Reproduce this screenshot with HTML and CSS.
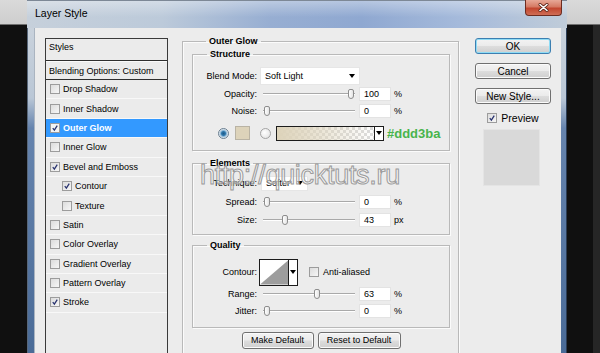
FILE: index.html
```html
<!DOCTYPE html>
<html lang="en">
<head>
  <meta charset="UTF-8">
  <title>Layer Style</title>
  <link rel="stylesheet" href="styles.css">
</head>
<body>
  <div class="window">
    <div class="titlebar">
      <span class="title">Layer Style</span>
      <span class="close">
        <svg width="11" height="9" viewBox="0 0 11 9"><path d="M2 1.5 L9 7.5 M9 1.5 L2 7.5" stroke="#5a2418" stroke-width="3" stroke-linecap="round"/><path d="M2 1.5 L9 7.5 M9 1.5 L2 7.5" stroke="#fff" stroke-width="1.6" stroke-linecap="round"/></svg>
      </span>
    </div>

    <div class="window-body">
      <div class="frame-side"></div>

      <div class="client">
        <ul class="styles-list">
          <li class="list-head">Styles</li>
          <li class="list-blend">Blending Options: Custom</li>
          <li class="style-item"><span class="check"></span>Drop Shadow</li>
          <li class="style-item"><span class="check"></span>Inner Shadow</li>
          <li class="style-item selected"><span class="check on"><svg viewBox="0 0 10 10"><path d="M2.2 5.2 L4.2 7.6 L7.8 2"/></svg></span>Outer Glow</li>
          <li class="style-item"><span class="check"></span>Inner Glow</li>
          <li class="style-item"><span class="check on"><svg viewBox="0 0 10 10"><path d="M2.2 5.2 L4.2 7.6 L7.8 2"/></svg></span>Bevel and Emboss</li>
          <li class="style-item sub"><span class="check on"><svg viewBox="0 0 10 10"><path d="M2.2 5.2 L4.2 7.6 L7.8 2"/></svg></span>Contour</li>
          <li class="style-item sub"><span class="check"></span>Texture</li>
          <li class="style-item"><span class="check"></span>Satin</li>
          <li class="style-item"><span class="check"></span>Color Overlay</li>
          <li class="style-item"><span class="check"></span>Gradient Overlay</li>
          <li class="style-item"><span class="check"></span>Pattern Overlay</li>
          <li class="style-item"><span class="check on"><svg viewBox="0 0 10 10"><path d="M2.2 5.2 L4.2 7.6 L7.8 2"/></svg></span>Stroke</li>
        </ul>

        <div class="settings">
          <fieldset class="group outer">
            <legend>Outer Glow</legend>

            <fieldset class="group structure">
              <legend>Structure</legend>
              <div class="row blend-row">
                <span class="field-label">Blend Mode:</span>
                <span class="select blend-select">Soft Light<span class="caret"></span></span>
              </div>
              <div class="row slider-row">
                <span class="field-label">Opacity:</span>
                <span class="slider"><span class="thumb" style="left: 85px"></span></span>
                <span class="num">100</span>
                <span class="unit">%</span>
              </div>
              <div class="row slider-row">
                <span class="field-label">Noise:</span>
                <span class="slider"><span class="thumb" style="left: 1px"></span></span>
                <span class="num">0</span>
                <span class="unit">%</span>
              </div>
              <div class="row color-row">
                <span class="radio on"></span>
                <span class="swatch"></span>
                <span class="radio"></span>
                <span class="gradient-field"><span class="gradient-fill"></span><span class="arrow-cell"><span class="caret"></span></span></span>
                <span class="hex">#ddd3ba</span>
              </div>
            </fieldset>

            <fieldset class="group elements">
              <legend>Elements</legend>
              <div class="row technique-row">
                <span class="field-label">Technique:</span>
                <span class="select technique-select">Softer<span class="caret"></span></span>
              </div>
              <div class="row slider-row tall">
                <span class="field-label">Spread:</span>
                <span class="slider"><span class="thumb" style="left: 1px"></span></span>
                <span class="num">0</span>
                <span class="unit">%</span>
              </div>
              <div class="row slider-row tall">
                <span class="field-label">Size:</span>
                <span class="slider"><span class="thumb" style="left: 19px"></span></span>
                <span class="num">43</span>
                <span class="unit">px</span>
              </div>
            </fieldset>

            <fieldset class="group quality">
              <legend>Quality</legend>
              <div class="row contour-row">
                <span class="field-label">Contour:</span>
                <span class="contour-box">
                  <svg class="contour-curve" width="29" height="25" viewBox="0 0 29 25"><polygon points="0,25 29,0 29,25" fill="#9d9d9d"/></svg>
                  <span class="arrow-cell"><span class="caret"></span></span>
                </span>
                <span class="check-label"><span class="check"></span>Anti-aliased</span>
              </div>
              <div class="row slider-row">
                <span class="field-label">Range:</span>
                <span class="slider"><span class="thumb" style="left: 51px"></span></span>
                <span class="num">63</span>
                <span class="unit">%</span>
              </div>
              <div class="row slider-row">
                <span class="field-label">Jitter:</span>
                <span class="slider"><span class="thumb" style="left: 1px"></span></span>
                <span class="num">0</span>
                <span class="unit">%</span>
              </div>
            </fieldset>

            <div class="defaults">
              <span class="btn make-default">Make Default</span>
              <span class="btn reset-default">Reset to Default</span>
            </div>
          </fieldset>

          <div class="watermark">http://quicktuts.ru</div>
        </div>

        <div class="actions">
          <span class="btn ok">OK</span>
          <span class="btn">Cancel</span>
          <span class="btn">New Style...</span>
          <span class="check-label preview-toggle"><span class="check on"><svg viewBox="0 0 10 10"><path d="M2.2 5.2 L4.2 7.6 L7.8 2"/></svg></span>Preview</span>
          <span class="preview-box"></span>
        </div>
      </div>

      <div class="frame-side right"></div>
    </div>
  </div>
</body>
</html>
```

FILE: styles.css
```css
:root {
  --face: #ececec;
  --line: #b9b9b9;
  --select-blue: #3399ff;
  --glow: #ddd3ba;
}

* {
  box-sizing: border-box;
}

body {
  margin: 0;
  width: 600px;
  height: 353px;
  overflow: hidden;
  font-family: "Liberation Sans", Arial, sans-serif;
  font-size: 9px;
  color: #000;
  background:
    linear-gradient(to bottom, transparent 25px, #262626 25px) right top / 7px 100% no-repeat,
    linear-gradient(to bottom, #dadada 0, #cecece 24px, #101010 25px);
  padding-left: 27px;
}

.window {
  width: 540px;
  height: 353px;
  display: flex;
  flex-direction: column;
}

/* title bar */
.titlebar {
  height: 28px;
  flex: none;
  display: flex;
  justify-content: space-between;
  align-items: flex-start;
  padding: 0 5px 0 8px;
  border-top: 1px solid #7d8896;
  background:
    linear-gradient(to bottom, rgba(255,255,255,0.35), rgba(255,255,255,0) 60%),
    linear-gradient(to right, #c6d0db 0%, #bccada 25%, #97aed2 45%, #8fa8d1 62%, #a5badb 80%, #c0ccd9 100%);
}

.title {
  font-size: 10.5px;
  line-height: 25px;
}

.close {
  width: 37px;
  height: 16px;
  margin-top: -1px;
  display: flex;
  align-items: center;
  justify-content: center;
  border: 1px solid #6d2c20;
  border-top: none;
  border-radius: 0 0 4px 4px;
  background: linear-gradient(to bottom, #e7a897 0%, #d57a64 45%, #c2462f 55%, #cf6d55 100%);
}

.window-body {
  flex: 1;
  display: flex;
  min-height: 0;
}

.frame-side {
  width: 7px;
  flex: none;
  border-left: 1px solid #58677a;
  background: linear-gradient(to bottom, #c9d2dc 0, #bac7d6 70px, #6684ae 100px, #4a6b97 100%);
}

.frame-side.right {
  width: 6px;
  border-left: none;
  border-right: 1px solid #2b3d55;
}

.client {
  flex: 1;
  display: flex;
  align-items: flex-start;
  padding: 10px 0 0 10px;
  background: var(--face);
  border-left: 1px solid #aab4c0;
  overflow: hidden;
}

/* styles list */
.styles-list {
  list-style: none;
  margin: 0;
  padding: 0;
  width: 123px;
  height: 315px;
  flex: none;
  border: 1px solid #3a3a3a;
  border-bottom: none;
  background: #ebebeb;
}

.list-head {
  height: 22px;
  padding: 3px 0 0 3px;
  line-height: 11px;
  border-bottom: 1px solid #2e2e2e;
}

.list-blend {
  height: 19px;
  padding: 0 0 0 3px;
  line-height: 18px;
  border-top: 1px solid #fafafa;
  border-bottom: 1px solid #2e2e2e;
}

.style-item {
  height: 19.4px;
  display: flex;
  align-items: center;
  gap: 3px;
  padding-left: 4px;
  border-bottom: 1px solid #f8f8f8;
}

.style-item.sub {
  padding-left: 16px;
}

.style-item.selected {
  background: var(--select-blue);
  color: #fff;
  font-weight: bold;
}

.check {
  width: 10px;
  height: 10px;
  flex: none;
  display: inline-flex;
  border: 1px solid #9c9c9c;
  background: linear-gradient(to bottom right, #dcdcdc, #f6f6f6);
}

.check svg {
  width: 8px;
  height: 8px;
  fill: none;
  stroke: #2a3470;
  stroke-width: 1.6;
}

.selected .check {
  background: #f4f4f4;
}

/* settings column */
.settings {
  position: relative;
  width: 277px;
  flex: none;
  margin-left: 14px;
  margin-top: -2px;
}

.group {
  margin: 0;
  border: 1px solid var(--line);
  box-shadow: inset 1px 1px 0 #fbfbfb, 1px 1px 0 #fbfbfb;
}

.group legend {
  font-weight: bold;
  padding: 0 3px;
  margin-left: 14px;
  line-height: 11px;
}

.outer {
  height: 317px;
  padding: 2px 8px 0 9px;
  border-bottom: none;
}

.structure {
  padding: 0 0 9px 0;
}

.elements {
  margin-top: 6.5px;
  padding: 0 0 4px 0;
}

.quality {
  margin-top: 5px;
  padding: 0 0 7px 0;
}

.row {
  display: flex;
  align-items: center;
}

.field-label {
  width: 64px;
  flex: none;
  text-align: right;
}

.blend-row {
  height: 19px;
  margin-top: 6px;
}

.slider-row {
  height: 17px;
}

.slider-row.tall {
  height: 18.5px;
}

.slider {
  position: relative;
  width: 92px;
  height: 10px;
  margin-left: 6px;
  background: linear-gradient(to bottom, transparent 4px, #a9a9a9 4px, #a9a9a9 5px, #fff 5px, #fff 6px, transparent 6px);
}

.thumb {
  position: absolute;
  top: 0;
  width: 6px;
  height: 10px;
  border: 1px solid #8d8d8d;
  border-radius: 2px 2px 3px 3px;
  background: linear-gradient(to right, #fff, #e4e4e4);
}

.num {
  width: 32px;
  height: 14px;
  margin-left: 4px;
  padding-left: 4px;
  line-height: 13px;
  background: #fff;
  border: 1px solid #e3e3e3;
}

.unit {
  margin-left: 3px;
}

.select {
  position: relative;
  display: flex;
  align-items: center;
  background: #fff;
  border: 1px solid #e6e6e6;
  padding-left: 4px;
}

.blend-select {
  width: 100px;
  height: 18px;
  margin-left: 3px;
}

.technique-select {
  width: 47px;
  height: 15px;
  margin-left: 4px;
}

.caret {
  width: 0;
  height: 0;
  border-left: 3.5px solid transparent;
  border-right: 3.5px solid transparent;
  border-top: 4px solid #000;
}

.select .caret {
  position: absolute;
  right: 4px;
  top: 50%;
  margin-top: -2px;
}

/* color row */
.color-row {
  height: 16px;
  margin-top: 6px;
}

.radio {
  width: 11px;
  height: 11px;
  flex: none;
  border-radius: 50%;
  border: 1px solid #a4a4a4;
  background: radial-gradient(circle at 40% 40%, #ffffff, #dedede);
}

.radio.on {
  margin-left: 25px;
  border-color: #6a7e90;
  background: radial-gradient(circle, #1f5a86 0, #2f78ad 2px, #8ab6d6 3px, #e9eef2 4.5px);
}

.swatch {
  width: 15px;
  height: 14px;
  margin: 0 10px 0 6px;
  background: var(--glow);
  border: 1px solid #b9b3a4;
}

.gradient-field {
  display: flex;
  width: 108px;
  height: 15px;
  margin-left: 5px;
  border: 1px solid #1c1c1c;
}

.gradient-fill {
  flex: 1;
  background:
    linear-gradient(to right, var(--glow) 0%, rgba(221,211,186,0.6) 45%, rgba(221,211,186,0) 100%),
    conic-gradient(#dcdcdc 25%, #fff 0 50%, #dcdcdc 0 75%, #fff 0) 0 0 / 6px 6px;
}

.arrow-cell {
  width: 9px;
  flex: none;
  display: flex;
  align-items: center;
  justify-content: center;
  background: #fff;
  border-left: 1px solid #1c1c1c;
}

.hex {
  margin-left: 3px;
  font-size: 13px;
  font-weight: bold;
  color: #48b44c;
}

/* elements */
.technique-row {
  height: 15px;
  margin: 7px 0 2px;
}

/* quality */
.contour-row {
  height: 27px;
  margin-top: 8px;
}

.contour-box {
  display: flex;
  width: 39px;
  height: 27px;
  margin-left: 2px;
  border: 1px solid #1c1c1c;
  background: #fff;
}

.contour-box .contour-curve {
  display: block;
}

.check-label {
  display: flex;
  align-items: center;
  gap: 4px;
}

.contour-row .check-label {
  margin-left: 11px;
}

.defaults {
  display: flex;
  justify-content: center;
  gap: 4px;
  margin-top: 4px;
}

/* buttons */
.btn {
  display: flex;
  align-items: center;
  justify-content: center;
  height: 17px;
  border: 1px solid #707070;
  border-radius: 3px;
  background: linear-gradient(to bottom, #f3f3f3 0%, #ebebeb 48%, #dddddd 52%, #cfcfcf 100%);
  box-shadow: inset 0 0 0 1px #fbfbfb;
}

.make-default {
  width: 72px;
}

.reset-default {
  width: 83px;
}

.actions {
  width: 76px;
  flex: none;
  margin-left: 16px;
  display: flex;
  flex-direction: column;
  align-items: center;
}

.actions .btn {
  width: 76px;
  height: 16px;
  margin-bottom: 9px;
  font-size: 10px;
}

.actions .btn.ok {
  border-color: #3c7fb1;
  box-shadow: inset 0 0 0 1px #8fdcf5;
}

.preview-toggle {
  font-size: 10.5px;
  margin-top: -1px;
}

.preview-box {
  width: 57px;
  height: 57px;
  margin-top: 5px;
  margin-right: 4px;
  background: #d9d9d9;
  border: 1px solid #e4e4e4;
}

/* watermark */
.watermark {
  position: absolute;
  left: 18px;
  top: 124px;
  font-family: "Liberation Sans", Arial, sans-serif;
  font-size: 27px;
  letter-spacing: -0.3px;
  color: rgba(255, 255, 255, 0.55);
  -webkit-text-stroke: 1px #9a9a9a;
  pointer-events: none;
}
```
